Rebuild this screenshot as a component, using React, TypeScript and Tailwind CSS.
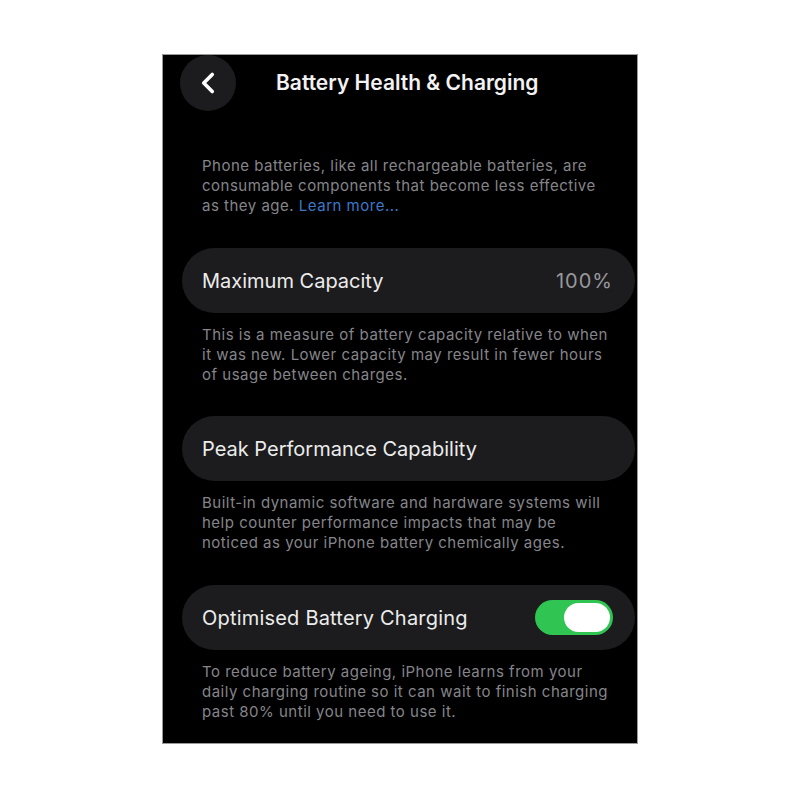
import { ChevronLeft } from 'lucide-react';

const font = { fontFamily: 'Inter, "Noto Sans", sans-serif' };

const Note = ({ lines }: { lines: React.ReactNode[] }) => (
  <p className="mt-[12px] px-5 text-[15px] leading-[20px] tracking-[0.5px] text-[#85858a]">
    {lines.map((l, i) => (
      <span key={i} className="block whitespace-nowrap">
        {l}
      </span>
    ))}
  </p>
);

const Row = ({ children }: { children: React.ReactNode }) => (
  <div className="flex h-[65px] items-center justify-between rounded-full bg-[#1c1c1e] pl-5 pr-[22px]">
    {children}
  </div>
);

export default function App() {
  return (
    <div className="min-h-[800px] w-[800px] bg-white pl-[162px] pt-[54px]" style={font}>
      <div className="h-[690px] w-[476px] overflow-hidden border border-[#9a9a9a] bg-black">
        {/* header */}
        <div className="flex h-[56px] items-center pl-[17px]">
          <div className="flex h-[56px] w-[56px] items-center justify-center rounded-full bg-[#1c1c1e]">
            <ChevronLeft className="h-[34px] w-[34px] text-white" strokeWidth={2.6} />
          </div>
          <h1 className="ml-[40px] text-[21px] font-semibold text-[#f2f2f2]">
            Battery Health &amp; Charging
          </h1>
        </div>

        <div className="pl-[19px] pr-[2px]">
          <p className="mt-[45px] px-5 text-[15px] leading-[20px] tracking-[0.5px] text-[#85858a]">
            <span className="block whitespace-nowrap">Phone batteries, like all rechargeable batteries, are</span>
            <span className="block whitespace-nowrap">consumable components that become less effective</span>
            <span className="block whitespace-nowrap">
              as they age. <span className="text-[#3d78c9]">Learn more...</span>
            </span>
          </p>

          <div className="mt-[32px]">
            <Row>
              <span className="text-[20px] text-[#ececec]">Maximum Capacity</span>
              <span className="text-[20px] tracking-[1px] text-[#98989d]">100%</span>
            </Row>
            <Note
              lines={[
                'This is a measure of battery capacity relative to when',
                'it was new. Lower capacity may result in fewer hours',
                'of usage between charges.',
              ]}
            />
          </div>

          <div className="mt-[31px]">
            <Row>
              <span className="text-[20px] text-[#ececec]">Peak Performance Capability</span>
            </Row>
            <Note
              lines={[
                'Built-in dynamic software and hardware systems will',
                'help counter performance impacts that may be',
                'noticed as your iPhone battery chemically ages.',
              ]}
            />
          </div>

          <div className="mt-[32px]">
            <Row>
              <span className="text-[20px] tracking-[0.2px] text-[#ececec]">Optimised Battery Charging</span>
              <div className="flex h-[35px] w-[78px] items-center justify-end rounded-full bg-[#30c552] p-[3px]">
                <div className="h-[29px] w-[46px] rounded-full bg-white" />
              </div>
            </Row>
            <Note
              lines={[
                'To reduce battery ageing, iPhone learns from your',
                'daily charging routine so it can wait to finish charging',
                'past 80% until you need to use it.',
              ]}
            />
          </div>
        </div>
      </div>
    </div>
  );
}
